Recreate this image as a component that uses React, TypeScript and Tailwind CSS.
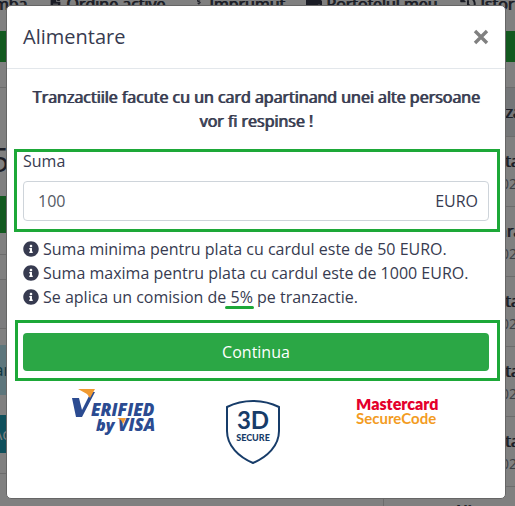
import { FaInfoCircle, FaFileAlt, FaWallet, FaHistory, FaHandHoldingUsd } from "react-icons/fa";

const notes = [
  "Suma minima pentru plata cu cardul este de 50 EURO.",
  "Suma maxima pentru plata cu cardul este de 1000 EURO.",
];

const rows = ["Alimentare", "Cumparare", "Alimentare", "Alimentare", "Alimentare", "Alimentare"];

function Backdrop() {
  return (
    <div aria-hidden="true" className="absolute inset-0 overflow-hidden bg-[#808080] text-[#1b1d26]">
      <nav className="-mt-2 flex h-[39px] items-start whitespace-nowrap text-base leading-6 [text-shadow:1px_0_0_currentColor]">
        <span className="flex w-[49px] shrink-0 justify-end pr-[22px]">Schimba</span>
        <span className="flex w-[143px] shrink-0 items-center gap-1"><FaFileAlt size={13} />Ordine active</span>
        <span className="flex w-[114px] shrink-0 items-center gap-1"><FaHandHoldingUsd size={13} />Imprumut</span>
        <span className="flex w-[154px] shrink-0 items-center gap-1"><FaWallet size={16} />Portofelul meu</span>
        <span className="flex shrink-0 items-center gap-1"><FaHistory size={16} />Istoric</span>
      </nav>
      <div className="h-[31px] bg-[#12591f]" />
      <div className="mt-[25px] flex">
        <div className="min-w-0 flex-1 border-t border-[#6c6c6c]">
          <div className="flex h-[108px] w-[9px] items-end justify-end pb-3 text-[32px] leading-[48px]">5</div>
          <div className="h-[37px] bg-[#12591f]" />
          <div className="mt-[21px] h-[25px] border-t border-[#6c6c6c]" />
          <div className="h-[50px] border-y border-[#6c6c6c] bg-[#7c7c7d]" />
          <div className="mt-4 h-[50px] bg-[#5d767c] leading-[50px] text-[#0a3440]">
            <div className="flex w-[10px] justify-end">ar</div>
          </div>
          <div className="mt-5 h-[38px] bg-[#0f4f5b] leading-[38px] text-[#808080]">
            <div className="flex w-[10px] justify-end">Ac</div>
          </div>
          <div className="mt-5 border-t border-[#6c6c6c]" />
        </div>
        <div className="w-[132px] border-l border-[#6c6c6c] text-base leading-6">
          <div className="flex h-[50px] items-center border-y border-[#6c6c6c] bg-[#747678] pl-[87px] [text-shadow:1px_0_0_currentColor]">Tranzactii</div>
          {rows.map((name, i) => (
            <div key={i} className="h-[70px] overflow-hidden border-b border-[#6c6c6c] pt-3 pl-[69px]">
              <div className="[text-shadow:1px_0_0_currentColor]">{name}</div>
              <div className="pl-10 text-sm leading-[22px] text-[#3c3f44]">2021</div>
            </div>
          ))}
        </div>
      </div>
    </div>
  );
}

function VerifiedByVisa() {
  return (
    <svg width="86" height="48" viewBox="0 0 86 48" role="img" aria-label="Verified by Visa" fontFamily="'Open Sans', sans-serif" fontWeight="800" fontStyle="italic" fill="#2b4b91">
      <path d="M0 9h7l3 12L19 3h4L10 28H4z" />
      <path d="M6 0h17l-5 9-3-4z" fill="#f09a32" />
      <text x="19" y="27" fontSize="17">ERIFIED</text>
      <text x="24" y="42" fontSize="16">by</text>
      <text x="46" y="42" fontSize="17">VISA</text>
      <path d="M45 29h9l-3 6-2-4z" fill="#f09a32" />
    </svg>
  );
}

function Secure3D() {
  return (
    <svg width="56" height="66" viewBox="0 0 56 66" role="img" aria-label="3D Secure" fontFamily="Lato, sans-serif" fontWeight="700" fill="#173c69" textAnchor="middle">
      <path d="M28 2C20 2 10 4 2 8v24c0 15 12 26 26 32 14-6 26-17 26-32V8C46 4 36 2 28 2z" fill="none" stroke="#173c69" strokeWidth="2" />
      <text x="28" y="30" fontSize="24">3D</text>
      <text x="28" y="42" fontSize="9" fontWeight="900">SECURE</text>
    </svg>
  );
}

function SecureCode() {
  return (
    <svg width="84" height="30" viewBox="0 0 84 30" role="img" aria-label="Mastercard SecureCode" fontFamily="Lato, sans-serif">
      <text x="0" y="11" fontSize="16" fill="#e4002b" fontWeight="800">Mastercard</text>
      <text x="0" y="25" fontSize="15" fill="#f39c1f" fontWeight="700">SecureCode</text>
    </svg>
  );
}

export default function App() {
  return (
    <div className="relative min-h-screen overflow-hidden px-[6px] pt-[5px] pr-[9px] pb-[7px] font-['Open_Sans',sans-serif] text-base leading-6 text-[#373b50]">
      <Backdrop />
      <div role="dialog" aria-labelledby="title" className="relative rounded-[5px] border border-[#666] bg-white">
        <header className="flex items-center justify-between border-b border-[#e3e7eb] p-4">
          <h5 id="title" className="text-xl leading-[30px]">Alimentare</h5>
          <button type="button" aria-label="Close" className="text-[#808080]">
            <svg width="16" height="16" viewBox="0 0 16 16" stroke="currentColor" strokeWidth="3.4" aria-hidden="true"><path d="M2 2l12 12M14 2L2 14" /></svg>
          </button>
        </header>
        <form className="p-4" onSubmit={(e) => e.preventDefault()}>
          <p className="text-center [text-shadow:1px_0_0_currentColor]">Tranzactiile facute cu un card apartinand unei alte persoane vor fi respinse !</p>
          <div className="relative mt-4">
            <div className="pointer-events-none absolute top-0 -right-[11px] -bottom-[11px] -left-[9px] border-3 border-[#1da838]" />
            <label htmlFor="suma" className="block">Suma</label>
            <div className="mt-2 flex h-10 items-center rounded border border-[#ced4da]">
              <input id="suma" defaultValue="100" className="min-w-0 flex-1 bg-transparent px-[14px] text-[#555a64] outline-none" />
              <span className="pr-[10px]">EURO</span>
            </div>
          </div>
          <ul className="mt-4">
            {notes.map((note) => (
              <li key={note} className="flex items-center gap-1"><FaInfoCircle size={16} className="shrink-0" />{note}</li>
            ))}
            <li className="flex items-center gap-1">
              <FaInfoCircle size={16} className="shrink-0" />
              <span>Se aplica un comision de<span className="relative"> 5%<span className="absolute -inset-x-px -bottom-px h-[3px] rounded-full bg-[#1da838]" /></span> pe tranzactie.</span>
            </li>
          </ul>
          <div className="relative mt-6">
            <div className="pointer-events-none absolute -top-[13px] -right-[11px] -bottom-[10px] -left-2 border-3 border-[#1da838]" />
            <button type="submit" className="block h-[38px] w-full rounded bg-[#2ba745] text-white">Continua</button>
          </div>
          <div className="mt-4 grid h-[95px] grid-cols-3 items-start justify-items-center">
            <span className="mt-[2px] pl-7"><VerifiedByVisa /></span>
            <span className="mt-3 pr-[6px]"><Secure3D /></span>
            <span className="mt-3 pr-[26px]"><SecureCode /></span>
          </div>
        </form>
      </div>
    </div>
  );
}
